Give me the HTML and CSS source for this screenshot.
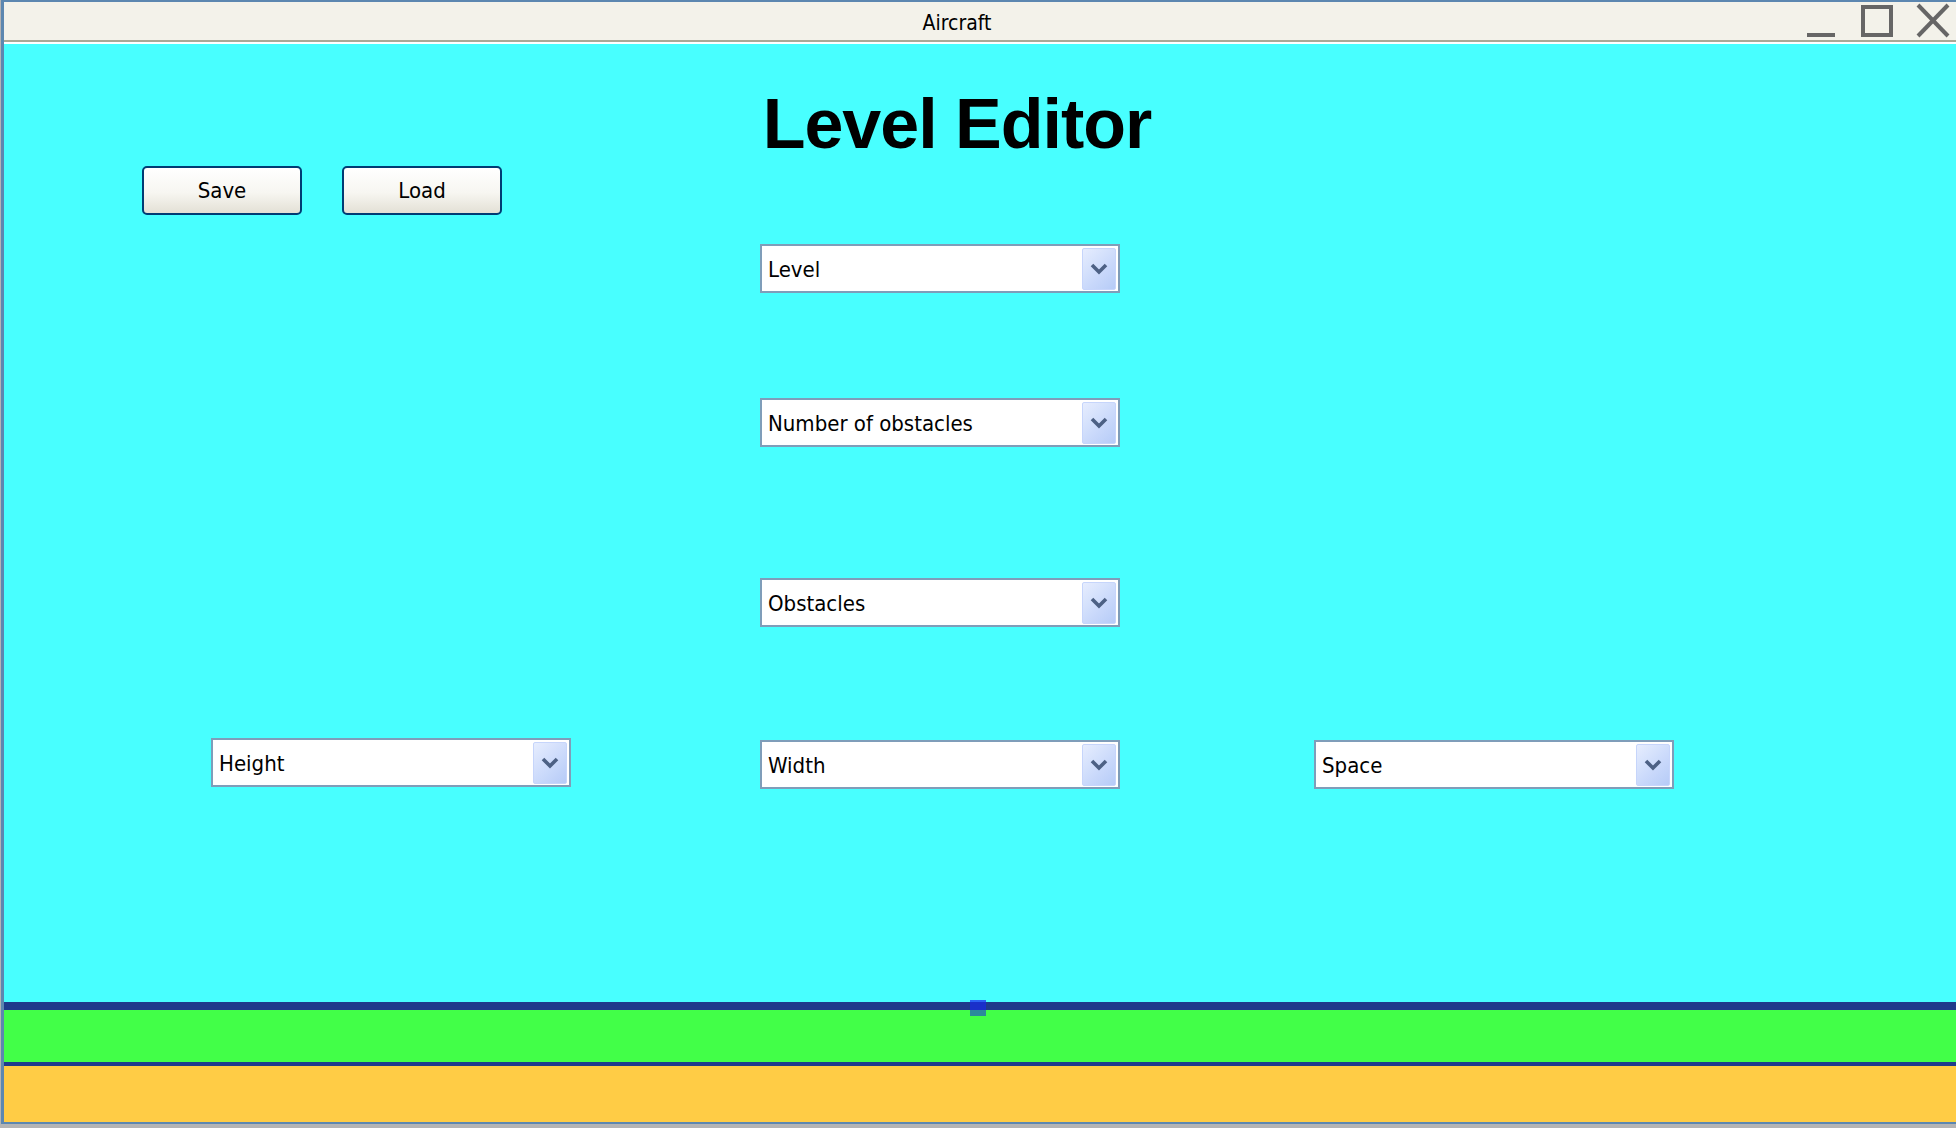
FILE: index.html
```html
<!DOCTYPE html>
<html lang="en">
<head>
<meta charset="utf-8">
<title>Aircraft</title>
<link rel="stylesheet" href="styles.css">
</head>
<body>
<div class="window">
  <header class="titlebar">
    <span class="title">Aircraft</span>
    <svg class="controls" width="156" height="38" viewBox="0 0 156 38" aria-hidden="true">
      <rect x="7" y="31" width="28" height="4" fill="#666"/>
      <rect x="63" y="5" width="28" height="28" fill="none" stroke="#666" stroke-width="4"/>
      <line x1="118" y1="3" x2="148" y2="34" stroke="#666" stroke-width="4"/>
      <line x1="148" y1="3" x2="118" y2="34" stroke="#666" stroke-width="4"/>
    </svg>
  </header>
  <main class="stage">
    <h1 class="heading">Level Editor</h1>
    <div class="actions">
      <button class="btn">Save</button>
      <button class="btn">Load</button>
    </div>
    <div class="combo combo-level">
      <span class="combo-label">Level</span>
      <span class="combo-btn"><svg width="18" height="12" viewBox="0 0 18 12"><polyline points="2,2 9,9 16,2" fill="none" stroke="#4d6185" stroke-width="3.6"/></svg></span>
    </div>
    <div class="combo combo-count">
      <span class="combo-label">Number of obstacles</span>
      <span class="combo-btn"><svg width="18" height="12" viewBox="0 0 18 12"><polyline points="2,2 9,9 16,2" fill="none" stroke="#4d6185" stroke-width="3.6"/></svg></span>
    </div>
    <div class="combo combo-obstacles">
      <span class="combo-label">Obstacles</span>
      <span class="combo-btn"><svg width="18" height="12" viewBox="0 0 18 12"><polyline points="2,2 9,9 16,2" fill="none" stroke="#4d6185" stroke-width="3.6"/></svg></span>
    </div>
    <div class="combo-row">
      <div class="combo combo-height">
        <span class="combo-label">Height</span>
        <span class="combo-btn"><svg width="18" height="12" viewBox="0 0 18 12"><polyline points="2,2 9,9 16,2" fill="none" stroke="#4d6185" stroke-width="3.6"/></svg></span>
      </div>
      <div class="combo combo-width">
        <span class="combo-label">Width</span>
        <span class="combo-btn"><svg width="18" height="12" viewBox="0 0 18 12"><polyline points="2,2 9,9 16,2" fill="none" stroke="#4d6185" stroke-width="3.6"/></svg></span>
      </div>
      <div class="combo combo-space">
        <span class="combo-label">Space</span>
        <span class="combo-btn"><svg width="18" height="12" viewBox="0 0 18 12"><polyline points="2,2 9,9 16,2" fill="none" stroke="#4d6185" stroke-width="3.6"/></svg></span>
      </div>
    </div>
  </main>
  <section class="ground">
    <div class="ground-edge"></div>
    <div class="grass"></div>
    <div class="ground-line"></div>
    <div class="sand"></div>
    <div class="marker"></div>
  </section>
</div>
</body>
</html>
```
FILE: styles.css
```css
html, body {
  margin: 0;
  padding: 0;
}
body {
  background: #b4b4b4;
  width: 1956px;
  height: 1128px;
  overflow: hidden;
  font-family: "DejaVu Sans Condensed", "DejaVu Sans", sans-serif;
  font-stretch: condensed;
}
.window {
  margin-left: 1px;
  width: 1952px;
  border-top: 2px solid #5c87b0;
  border-left: 3px solid #5c87b0;
  border-bottom: 2px solid #5c87b0;
}
.titlebar {
  display: grid;
  height: 38px;
  background: #f3f2ea;
  border-bottom: 2px solid #a8a896;
}
.title {
  grid-area: 1 / 1;
  width: 1906px;
  text-align: center;
  font-size: 21px;
  line-height: 32px;
  padding-top: 5px;
  color: #000;
}
.controls {
  grid-area: 1 / 1;
  justify-self: end;
  display: block;
}
.stage {
  height: 958px;
  background: #48ffff;
  border-top: 2px solid #fff;
  display: flex;
  flex-direction: column;
  align-items: flex-start;
}
.heading {
  margin: 45px 0 0;
  width: 1906px;
  height: 70px;
  text-align: center;
  font-family: "Liberation Sans", Arial, sans-serif;
  font-stretch: normal;
  font-weight: bold;
  font-size: 70px;
  line-height: 70px;
  letter-spacing: -1px;
  color: #000;
}
.actions {
  display: flex;
  gap: 40px;
  margin-top: 7px;
  padding-left: 138px;
}
.btn {
  box-sizing: border-box;
  width: 160px;
  height: 49px;
  border: 2px solid #003c74;
  border-radius: 5px;
  background: linear-gradient(#ffffff 0%, #f7f6f1 55%, #e3e0d5 100%);
  font-family: inherit;
  font-stretch: condensed;
  font-size: 22px;
  color: #000;
  padding: 0;
}
.combo {
  box-sizing: border-box;
  width: 360px;
  height: 49px;
  border: 2px solid #7f9db9;
  background: #fff;
  display: flex;
  align-items: center;
  padding: 2px 2px 1px 6px;
}
.combo-label {
  flex: 1;
  font-size: 22px;
  color: #000;
}
.combo-btn {
  box-sizing: border-box;
  width: 34px;
  height: 42px;
  border: 1px solid #c6d5fb;
  border-radius: 2px;
  background: linear-gradient(135deg, #e6edfe 0%, #cbdafb 55%, #b6cbf7 100%);
  display: flex;
  align-items: center;
  justify-content: center;
}
.combo-btn svg {
  display: block;
}
.combo-level {
  margin-top: 29px;
  margin-left: 756px;
}
.combo-count {
  margin-top: 105px;
  margin-left: 756px;
}
.combo-obstacles {
  margin-top: 131px;
  margin-left: 756px;
}
.combo-row {
  display: flex;
  align-items: flex-start;
  margin-top: 111px;
}
.combo-height {
  margin-left: 207px;
}
.combo-width {
  margin-left: 189px;
  margin-top: 2px;
}
.combo-space {
  margin-left: 194px;
  margin-top: 2px;
}
.ground {
  position: relative;
}
.ground-edge {
  height: 8px;
  background: #1f3b8b;
}
.grass {
  height: 52px;
  background: #42ff48;
}
.ground-line {
  height: 4px;
  background: #1f3b8b;
}
.sand {
  height: 56px;
  background: #ffcc45;
}
.marker {
  position: absolute;
  left: 966px;
  top: -2px;
  width: 16px;
  height: 16px;
  background: linear-gradient(#2b62f4 0, #2b62f4 2px, #1a2fc9 2px, #1a2fc9 10px, #2b8b9b 10px, #2b8b9b 16px);
}
```
